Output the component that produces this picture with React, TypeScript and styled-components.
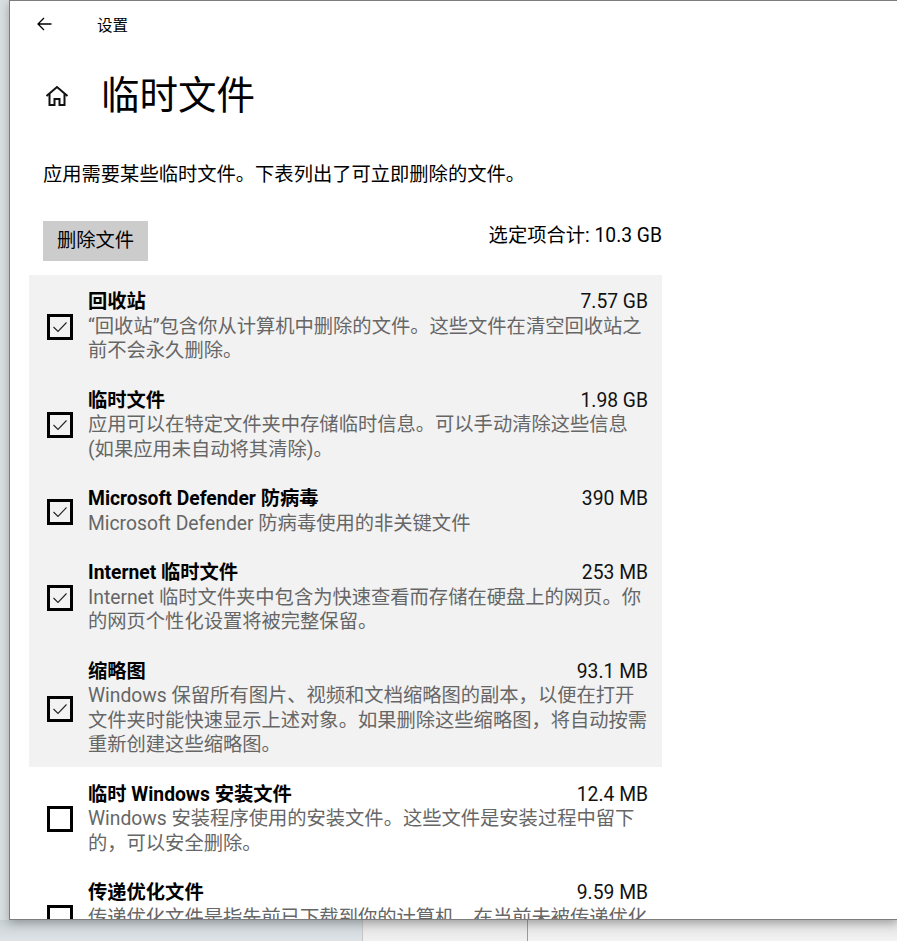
import React from 'react';
import styled, { createGlobalStyle } from 'styled-components';

const GlobalStyle = createGlobalStyle`
  html, body {
    margin: 0;
    padding: 0;
    background: #dfe4e7;
  }
  body {
    font-family: Roboto, 'Noto Sans CJK SC', sans-serif;
    color: #000;
  }
`;

const Desktop = styled.div`
  width: 897px;
  height: 941px;
  display: flex;
  flex-direction: column;
  overflow: hidden;
  background: linear-gradient(90deg, #d9dee1 0%, #e6e9eb 100%);
`;

const Window = styled.div`
  position: relative;
  z-index: 1;
  margin-left: 9px;
  height: 920px;
  box-sizing: border-box;
  border: 1px solid #7d7d7d;
  border-right: 0;
  background: #fff;
  overflow: hidden;
  box-shadow: 0 3px 9px rgba(0, 0, 0, 0.28);
`;

const Strip = styled.div`
  display: flex;
  flex: 1;
`;

const StripPart = styled.div<{ w: number; bg: string; line?: string }>`
  width: ${p => p.w}px;
  background: ${p => p.bg};
  border-left: ${p => (p.line ? `1px solid ${p.line}` : '0')};
  box-sizing: border-box;
`;

const HeaderBar = styled.div`
  height: 45px;
  display: flex;
  align-items: center;
  gap: 45px;
  padding-left: 27px;
  font-size: 15.5px;
`;

const TitleRow = styled.div`
  margin-top: 25px;
  height: 50px;
  display: flex;
  align-items: center;
  gap: 32px;
  padding-left: 35px;
`;

const PageTitle = styled.h1`
  margin: 0;
  font-size: 38.5px;
  font-weight: 400;
  line-height: 50px;
`;

const Content = styled.div`
  width: 619px;
  padding-left: 33px;
`;

const Intro = styled.p`
  margin: 42px 0 0;
  font-size: 19.3px;
  line-height: 24.5px;
  white-space: nowrap;
`;

const ActionRow = styled.div`
  margin-top: 33px;
  display: flex;
  justify-content: space-between;
  align-items: flex-start;
`;

const GreyButton = styled.button`
  height: 40px;
  padding: 0 14px;
  border: 0;
  background: #cccccc;
  font-family: inherit;
  font-size: 19.3px;
  color: #000;
  line-height: 40px;
`;

const Total = styled.div`
  margin-top: 3px;
  font-size: 19.3px;
  line-height: 24.5px;
`;

const List = styled.div`
  margin: 14px 0 0 -14px;
  display: flex;
  flex-direction: column;
`;

const Item = styled.div<{ checked: boolean }>`
  display: flex;
  align-items: center;
  gap: 15px;
  padding: 15.5px 14px 9.5px 18px;
  background: ${p => (p.checked ? '#f2f2f2' : '#fff')};
`;

const Box = styled.div`
  flex: none;
  width: 26px;
  height: 26px;
  box-sizing: border-box;
  border: 3px solid #000;
  display: flex;
  align-items: center;
  justify-content: center;
`;

const ItemBody = styled.div`
  flex: 1;
  font-size: 19.3px;
  line-height: 24.5px;
`;

const ItemHead = styled.div`
  display: flex;
  justify-content: space-between;
`;

const ItemName = styled.span`
  font-weight: 700;
`;

const Size = styled.span`
  color: #111;
`;

const Line = styled.div`
  color: #666;
  white-space: nowrap;
`;

const BackArrow = () => (
  <svg width="15" height="14" viewBox="0 0 15 14" fill="none" stroke="#000" strokeWidth="1.3">
    <path d="M1 7 H14.5 M7 1 L1 7 L7 13" />
  </svg>
);

const HomeIcon = () => (
  <svg width="24" height="22" viewBox="0 0 24 22" fill="none" stroke="#111" strokeWidth="2" strokeLinejoin="miter">
    <path d="M1.5 11 L12 2 L22.5 11" />
    <path d="M4.5 9 V20 H9.5 V14 H14.5 V20 H19.5 V9" />
  </svg>
);

const Tick = () => (
  <svg width="20" height="20" viewBox="0 0 20 20" fill="none" stroke="#222" strokeWidth="1.1">
    <path d="M3.5 10 L8 14.5 L16.5 5.5" />
  </svg>
);

const items = [
  {
    name: '回收站',
    size: '7.57 GB',
    checked: true,
    lines: ['“回收站”包含你从计算机中删除的文件。这些文件在清空回收站之', '前不会永久删除。'],
  },
  {
    name: '临时文件',
    size: '1.98 GB',
    checked: true,
    lines: ['应用可以在特定文件夹中存储临时信息。可以手动清除这些信息', '(如果应用未自动将其清除)。'],
  },
  {
    name: 'Microsoft Defender 防病毒',
    size: '390 MB',
    checked: true,
    lines: ['Microsoft Defender 防病毒使用的非关键文件'],
  },
  {
    name: 'Internet 临时文件',
    size: '253 MB',
    checked: true,
    lines: ['Internet 临时文件夹中包含为快速查看而存储在硬盘上的网页。你', '的网页个性化设置将被完整保留。'],
  },
  {
    name: '缩略图',
    size: '93.1 MB',
    checked: true,
    lines: [
      'Windows 保留所有图片、视频和文档缩略图的副本，以便在打开',
      '文件夹时能快速显示上述对象。如果删除这些缩略图，将自动按需',
      '重新创建这些缩略图。',
    ],
  },
  {
    name: '临时 Windows 安装文件',
    size: '12.4 MB',
    checked: false,
    lines: ['Windows 安装程序使用的安装文件。这些文件是安装过程中留下', '的，可以安全删除。'],
  },
  {
    name: '传递优化文件',
    size: '9.59 MB',
    checked: false,
    lines: ['传递优化文件是指先前已下载到你的计算机，在当前未被传递优化', '服务使用的文件。'],
  },
];

export default function App() {
  return (
    <Desktop>
      <GlobalStyle />
      <Window>
        <HeaderBar>
          <BackArrow />
          <span>设置</span>
        </HeaderBar>
        <TitleRow>
          <HomeIcon />
          <PageTitle>临时文件</PageTitle>
        </TitleRow>
        <Content>
          <Intro>应用需要某些临时文件。下表列出了可立即删除的文件。</Intro>
          <ActionRow>
            <GreyButton>删除文件</GreyButton>
            <Total>选定项合计: 10.3 GB</Total>
          </ActionRow>
          <List>
            {items.map(item => (
              <Item key={item.name} checked={item.checked}>
                <Box>{item.checked && <Tick />}</Box>
                <ItemBody>
                  <ItemHead>
                    <ItemName>{item.name}</ItemName>
                    <Size>{item.size}</Size>
                  </ItemHead>
                  {item.lines.map(l => (
                    <Line key={l}>{l}</Line>
                  ))}
                </ItemBody>
              </Item>
            ))}
          </List>
        </Content>
      </Window>
      <Strip>
        <StripPart w={362} bg="linear-gradient(180deg, #c9d0d4 0%, #dde3e6 100%)" />
        <StripPart w={165} bg="linear-gradient(180deg, #dcdcdc 0%, #f1f1f1 100%)" line="#c4c4c4" />
        <StripPart w={370} bg="linear-gradient(180deg, #dedede 0%, #f3f3f3 100%)" line="#9a9a9a" />
      </Strip>
    </Desktop>
  );
}
